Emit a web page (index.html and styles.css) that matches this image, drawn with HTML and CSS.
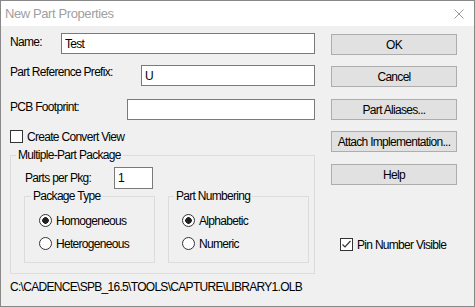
FILE: index.html
```html
<!DOCTYPE html>
<html lang="en">
<head>
  <meta charset="UTF-8" />
  <title>New Part Properties</title>
  <link rel="stylesheet" href="styles.css">
</head>
<body>
  <div class="window">
    <div class="titlebar">
      <span class="title">New Part Properties</span>
      <svg class="close" width="10" height="10" viewBox="0 0 10 10">
        <path d="M0.5 0.5 L9.5 9.5 M9.5 0.5 L0.5 9.5" stroke="#9a9a9a" stroke-width="1" fill="none"/>
      </svg>
    </div>
    <div class="content">
      <div class="main">
        <div class="field">
          <label class="lbl-name">Name:</label>
          <input class="textbox tb-name" type="text" value="Test">
        </div>
        <div class="field field-prefix">
          <label>Part Reference Prefix:</label>
          <input class="textbox tb-prefix" type="text" value="U">
        </div>
        <div class="field field-pcb">
          <label class="lbl-pcb">PCB Footprint:</label>
          <input class="textbox tb-pcb" type="text" value="">
        </div>
        <div class="checkrow convert-row">
          <span class="check"></span>
          <span>Create Convert View</span>
        </div>

        <fieldset class="group outer-group">
          <legend>Multiple-Part Package</legend>
          <div class="pkg-row">
            <label class="pkg-label">Parts per Pkg:</label>
            <input class="textbox tb-pkg" type="text" value="1">
          </div>
          <div class="subgroups">
            <fieldset class="group sub-type">
              <legend>Package Type</legend>
              <div class="radio-list">
                <div class="radio"><span class="dot on"></span><span>Homogeneous</span></div>
                <div class="radio"><span class="dot"></span><span>Heterogeneous</span></div>
              </div>
            </fieldset>
            <fieldset class="group sub-num">
              <legend>Part Numbering</legend>
              <div class="radio-list">
                <div class="radio"><span class="dot on"></span><span>Alphabetic</span></div>
                <div class="radio"><span class="dot"></span><span>Numeric</span></div>
              </div>
            </fieldset>
          </div>
        </fieldset>

        <div class="path">C:\CADENCE\SPB_16.5\TOOLS\CAPTURE\LIBRARY1.OLB</div>
      </div>

      <div class="side">
        <button class="btn">OK</button>
        <button class="btn">Cancel</button>
        <button class="btn btn-gap">Part Aliases...</button>
        <button class="btn">Attach Implementation...</button>
        <button class="btn btn-gap">Help</button>
        <div class="checkrow pin-row">
          <span class="check">
            <svg width="11" height="11" viewBox="0 0 11 11">
              <path d="M1.5 5.5 L4 8 L9.5 2" stroke="#333" stroke-width="1.2" fill="none"/>
            </svg>
          </span>
          <span>Pin Number Visible</span>
        </div>
      </div>
    </div>
  </div>
</body>
</html>
```

FILE: styles.css
```css
body {
  margin: 0;
  padding: 0;
  background-color: #f0f0f0;
  font-family: 'Liberation Sans', Arial, sans-serif;
  font-size: 12px;
  line-height: 14px;
  letter-spacing: -0.7px;
  color: #000;
}

.window {
  width: 475px;
  height: 307px;
  box-sizing: border-box;
  border: 1px solid #888;
  background-color: #f0f0f0;
  display: flex;
  flex-direction: column;
}

.titlebar {
  height: 25px;
  background-color: #fff;
  display: flex;
  align-items: center;
  justify-content: space-between;
  padding: 0 10px 0 4px;
}

.title {
  font-size: 13px;
  letter-spacing: -0.4px;
  color: #a0a0a0;
}

.close {
  display: block;
}

.content {
  display: flex;
  gap: 16px;
  padding-left: 9px;
}

.main {
  width: 305px;
  display: flex;
  flex-direction: column;
  padding-top: 7px;
}

.field {
  display: flex;
  justify-content: space-between;
  align-items: flex-start;
  height: 21px;
}

.lbl-name {
  padding-top: 2px;
}

.lbl-pcb {
  padding-top: 1px;
}

.field-prefix {
  margin-top: 11px;
}

.field-pcb {
  margin-top: 13px;
}

.textbox {
  box-sizing: border-box;
  height: 21px;
  border: 1px solid #7a7a7a;
  background-color: #fff;
  padding: 0 3px;
  margin: 0;
  font: inherit;
  letter-spacing: inherit;
  color: #000;
  outline: none;
}

.tb-name { width: 254px; }
.tb-prefix { width: 174px; }
.tb-pcb { width: 188px; }
.tb-pkg { width: 39px; height: 22px; }

.checkrow {
  display: flex;
  align-items: center;
  gap: 4px;
  height: 13px;
}

.convert-row {
  margin-top: 10px;
}

.check {
  width: 13px;
  height: 13px;
  box-sizing: border-box;
  border: 1px solid #333;
  background-color: #fff;
  display: flex;
  align-items: center;
  justify-content: center;
}

.group {
  margin: 0;
  padding: 0;
  border: 1px solid #dcdcdc;
  min-width: 0;
}

.group legend {
  padding: 0 2px;
  margin-left: 5px;
  line-height: 14px;
}

.outer-group {
  margin-top: 5px;
  padding-bottom: 10px;
}

.pkg-row {
  display: flex;
  align-items: center;
  height: 22px;
  margin-top: 5px;
  padding-left: 14px;
}

.pkg-label {
  width: 89px;
}

.subgroups {
  display: flex;
  gap: 13px;
  padding-left: 13px;
}

.sub-type { width: 129px; }
.sub-num { width: 139px; }
.sub-type legend { margin-left: 6px; }

.radio-list {
  display: flex;
  flex-direction: column;
  gap: 10px;
  padding: 11px 0 12px 14px;
}

.sub-num .radio-list {
  padding-left: 13px;
}

.radio {
  display: flex;
  align-items: center;
  gap: 4px;
  height: 13px;
}

.dot {
  width: 13px;
  height: 13px;
  box-sizing: border-box;
  border: 1px solid #333;
  border-radius: 50%;
  background-color: #fff;
}

.dot.on {
  background: radial-gradient(circle, #222 0 3px, #fff 3.6px);
}

.path {
  margin-top: 6px;
  white-space: nowrap;
}

.side {
  width: 126px;
  display: flex;
  flex-direction: column;
  gap: 11px;
  padding-top: 8px;
}

.btn {
  height: 21px;
  box-sizing: border-box;
  border: 1px solid #adadad;
  background-color: #e1e1e1;
  font: inherit;
  letter-spacing: inherit;
  color: #000;
  padding: 0;
  white-space: nowrap;
}

.btn-gap {
  margin-top: 1px;
}

.pin-row {
  margin-top: 42px;
  padding-left: 9px;
}
```
